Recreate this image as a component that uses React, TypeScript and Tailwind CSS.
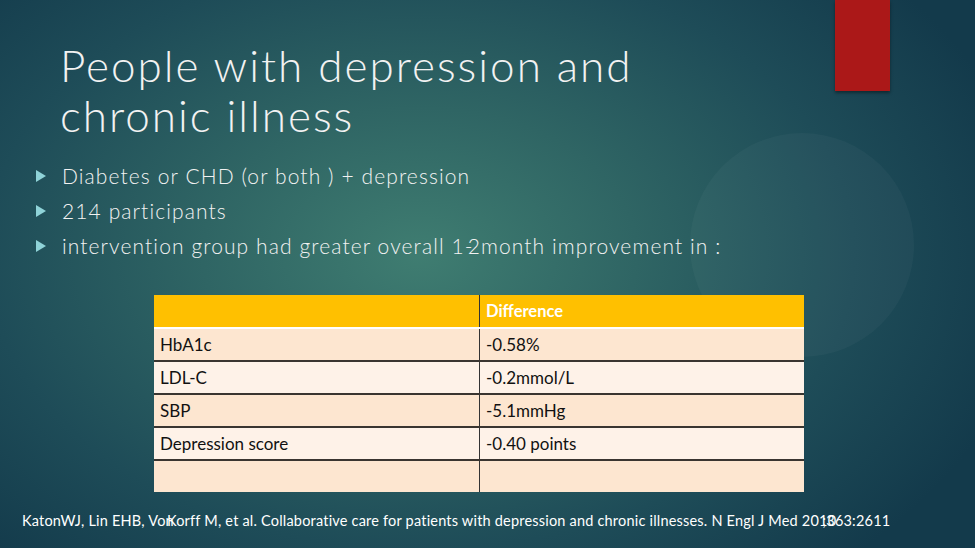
import React from "react";

const rows = [
  { k: "HbA1c", v: "-0.58%", dark: true },
  { k: "LDL-C", v: "-0.2mmol/L", dark: false },
  { k: "SBP", v: "-5.1mmHg", dark: true },
  { k: "Depression score", v: "-0.40 points", dark: false },
  { k: "", v: "", dark: true },
];

function Tri() {
  return (
    <svg width="12" height="14" viewBox="0 0 12 14" className="shrink-0">
      <path d="M1 1 L11 7 L1 13 Z" fill="#8fd3d8" />
    </svg>
  );
}

export default function App() {
  return (
    <div
      className="relative w-[975px] h-[548px] overflow-hidden text-white"
      style={{
        background:
          "radial-gradient(ellipse 620px 420px at 420px 255px, #3f7d71 0%, #2f6564 35%, #1e4c58 70%, #133a4b 100%)",
      }}
    >
      <div className="absolute left-[690px] top-[133px] w-[224px] h-[224px] rounded-full bg-[#ffffff08]" />
      <div className="absolute left-[835px] top-0 w-[55px] h-[91px] bg-[#ab1818] shadow-[0_2px_3px_rgba(0,0,0,0.4)]" />

      <div className="relative flex flex-col h-full">
        <h1
          className="pl-[60px] pt-[40px] text-[44px] leading-[50px] font-light text-[#f2f2f2] tracking-[2px]"
          style={{ fontFamily: "Lato, 'Noto Sans', sans-serif" }}
        >
          People with depression and
          <br />
          chronic illness
        </h1>

        <ul
          className="mt-[24px] pl-[35px] flex flex-col gap-[11px] text-[21px] leading-[24px] text-[#f2f2f2] font-light tracking-[1.1px]"
          style={{ fontFamily: "Lato, 'Noto Sans', sans-serif" }}
        >
          <li className="flex items-center gap-[15px]">
            <Tri />
            <span>Diabetes or CHD (or both ) + depression</span>
          </li>
          <li className="flex items-center gap-[15px]">
            <Tri />
            <span>214 participants</span>
          </li>
          <li className="flex items-center gap-[15px]">
            <Tri />
            <span>
              intervention group had greater overall 1<span className="mr-[-6px]">-</span>2month improvement in :
            </span>
          </li>
        </ul>

        <div className="mt-[37px] ml-[154px] w-[650px]" style={{ fontFamily: "Lato, 'Open Sans', sans-serif" }}>
          <div className="grid grid-cols-[326px_1fr] h-[34px] bg-[#ffc000] border-b-2 border-white">
            <div className="border-r border-[#333]" />
            <div className="flex items-center pl-[6px] text-[16.5px] font-bold text-white">Difference</div>
          </div>
          {rows.map((r, i) => (
            <div
              key={i}
              className={
                "grid grid-cols-[326px_1fr] text-[17px] text-[#111] " +
                (r.dark ? "bg-[#fde6d0]" : "bg-[#fef2e8]") +
                (i < rows.length - 1 ? " h-[33px] border-b-2 border-[#3a3530]" : " h-[31px]")
              }
            >
              <div className="flex items-center pl-[6px] border-r border-[#333]">{r.k}</div>
              <div className="flex items-center pl-[6px]">{r.v}</div>
            </div>
          ))}
        </div>

        <div
          className="mt-[20px] pl-[22px] text-[14.5px] leading-[17px] text-white whitespace-nowrap tracking-[0.2px]"
          style={{ fontFamily: "Lato, 'Open Sans', sans-serif" }}
        >
          KatonWJ, Lin EHB, Von<span className="ml-[-7px]">Korff</span> M, et al. Collaborative care for patients with depression and chronic illnesses. N Engl J Med 2010<span className="ml-[-14px]">;363:2611</span>
        </div>
      </div>
    </div>
  );
}
